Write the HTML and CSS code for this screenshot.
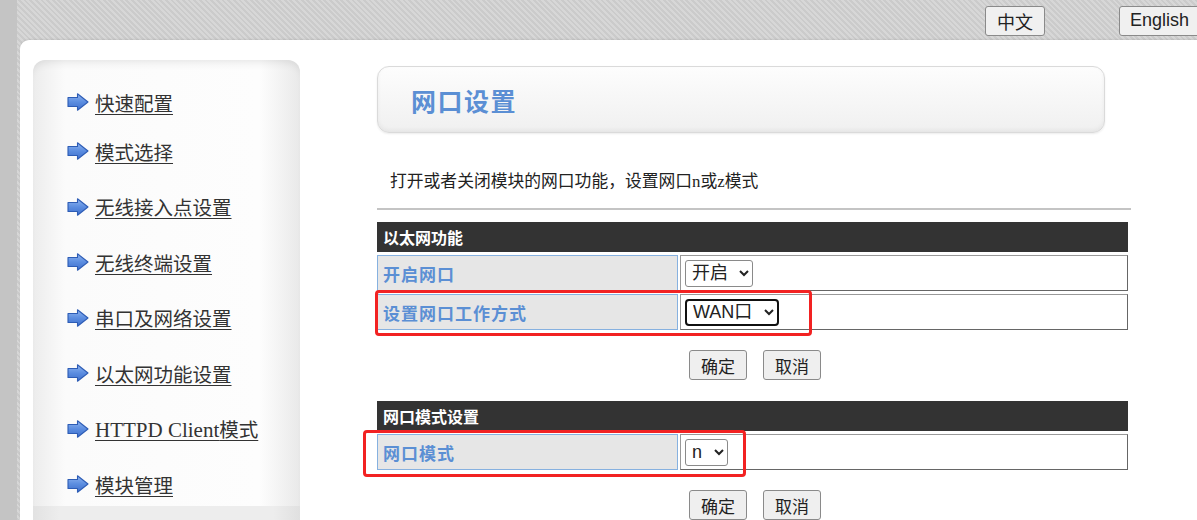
FILE: index.html
```html
<!DOCTYPE html>
<html lang="zh-CN">
<head>
    <meta charset="UTF-8">
    <meta name="viewport" content="width=device-width, initial-scale=1.0">
    <title>网口设置</title>
    <link rel="stylesheet" href="styles.css">
</head>
<body>
    <svg width="0" height="0" class="defs">
        <defs>
            <linearGradient id="arrowFill" x1="0" y1="0" x2="0" y2="1">
                <stop offset="0" stop-color="#8fb4f0"/>
                <stop offset="0.5" stop-color="#5b8de0"/>
                <stop offset="1" stop-color="#3f6fcc"/>
            </linearGradient>
        </defs>
    </svg>
    <div class="topbar">
        <button class="lang">中文</button>
        <button class="lang lang-en">English</button>
    </div>
    <div class="panel">
        <div class="sidebar">
            <ul class="nav">
                <li><svg class="arrow" viewBox="0 0 22 18"><path d="M1 4.5H10.5V0.8L21 9L10.5 17.2V13.5H1Z"/></svg><a href="#">快速配置</a></li>
                <li><svg class="arrow" viewBox="0 0 22 18"><path d="M1 4.5H10.5V0.8L21 9L10.5 17.2V13.5H1Z"/></svg><a href="#">模式选择</a></li>
                <li><svg class="arrow" viewBox="0 0 22 18"><path d="M1 4.5H10.5V0.8L21 9L10.5 17.2V13.5H1Z"/></svg><a href="#">无线接入点设置</a></li>
                <li><svg class="arrow" viewBox="0 0 22 18"><path d="M1 4.5H10.5V0.8L21 9L10.5 17.2V13.5H1Z"/></svg><a href="#">无线终端设置</a></li>
                <li><svg class="arrow" viewBox="0 0 22 18"><path d="M1 4.5H10.5V0.8L21 9L10.5 17.2V13.5H1Z"/></svg><a href="#">串口及网络设置</a></li>
                <li><svg class="arrow" viewBox="0 0 22 18"><path d="M1 4.5H10.5V0.8L21 9L10.5 17.2V13.5H1Z"/></svg><a href="#">以太网功能设置</a></li>
                <li><svg class="arrow" viewBox="0 0 22 18"><path d="M1 4.5H10.5V0.8L21 9L10.5 17.2V13.5H1Z"/></svg><a href="#"><span class="latin">HTTPD Client</span>模式</a></li>
                <li><svg class="arrow" viewBox="0 0 22 18"><path d="M1 4.5H10.5V0.8L21 9L10.5 17.2V13.5H1Z"/></svg><a href="#">模块管理</a></li>
            </ul>
            <div class="sidebar-foot"></div>
        </div>

        <div class="main">
            <div class="title-box">
                <h1>网口设置</h1>
            </div>
            <p class="desc">打开或者关闭模块的网口功能，设置网口n或z模式</p>
            <hr class="divider">

            <div class="section">
                <div class="sec-head">以太网功能</div>
                <div class="row">
                    <div class="label">开启网口</div>
                    <div class="value">
                        <select class="sel"><option>开启</option><option>关闭</option></select>
                    </div>
                </div>
                <div class="row">
                    <div class="label">设置网口工作方式</div>
                    <div class="value">
                        <select class="sel sel-focus"><option>WAN口</option><option>LAN口</option></select>
                    </div>
                    <span class="mark mark-wan"></span>
                </div>
                <div class="actions">
                    <button class="btn">确定</button>
                    <button class="btn">取消</button>
                </div>
            </div>

            <div class="section">
                <div class="sec-head">网口模式设置</div>
                <div class="row">
                    <div class="label">网口模式</div>
                    <div class="value">
                        <select class="sel"><option>n</option><option>z</option></select>
                    </div>
                    <span class="mark mark-mode"></span>
                </div>
                <div class="actions">
                    <button class="btn">确定</button>
                    <button class="btn">取消</button>
                </div>
            </div>
        </div>
    </div>
</body>
</html>
```

FILE: styles.css
```css
html, body {
    margin: 0;
    padding: 0;
    height: 100%;
    overflow: hidden;
}
body {
    font-family: "Liberation Serif", "Noto Sans CJK SC", serif;
    color: #333;
    background-color: #c6c6c6;
    background-image:
        linear-gradient(to right, #c4c4c4 0, #c4c4c4 17px, transparent 17px),
        repeating-linear-gradient(45deg, #cbcbcb 0, #cbcbcb 2px, #d7d7d7 2px, #d7d7d7 4px);
}
.defs {
    position: absolute;
}
.topbar {
    height: 40px;
    display: flex;
    justify-content: flex-end;
    align-items: center;
    gap: 74px;
    margin-right: -3px;
}
.lang {
    font-family: "Liberation Sans", "Noto Sans CJK SC", sans-serif;
    font-size: 18px;
    height: 30px;
    padding: 0 11px;
    border: 1px solid #8a8a8a;
    border-radius: 3px;
    background-color: #f0f0f0;
    color: #222;
    margin-top: 1px;
}
.lang-en {
    padding: 0 10px;
}
.panel {
    margin-left: 20px;
    height: 480px;
    background-color: #fff;
    border-top-left-radius: 9px;
    box-shadow: 0 -1px 2px rgba(0, 0, 0, 0.08);
    display: flex;
    padding: 20px 0 0 13px;
    box-sizing: border-box;
}
.sidebar {
    width: 267px;
    height: 460px;
    flex-shrink: 0;
    border-radius: 12px 12px 0 0;
    background: linear-gradient(to right, #ececec 0, #fbfbfb 12%, #fdfdfd 85%, #e9e9e9 100%);
    box-shadow: inset 0 8px 10px -6px rgba(0, 0, 0, 0.1);
    position: relative;
}
.sidebar-foot {
    position: absolute;
    left: 0;
    right: 0;
    bottom: 0;
    height: 14px;
    background: linear-gradient(to right, #e2e2e2, #ededed 10%, #ededed 90%, #e0e0e0);
}
.nav {
    list-style: none;
    margin: 0;
    padding: 21px 0 0 34px;
}
.nav li {
    height: 55.5px;
    display: flex;
    align-items: center;
    gap: 6px;
}
.nav li:first-child {
    height: 42.5px;
}
.arrow {
    width: 22px;
    height: 18px;
    flex-shrink: 0;
}
.arrow path {
    fill: url(#arrowFill);
    stroke: #2d5cb5;
    stroke-width: 1.1;
    stroke-linejoin: round;
}
.nav a {
    font-size: 19.5px;
    color: #333;
    text-decoration: underline;
    text-underline-offset: 3px;
}
.latin {
    font-size: 21px;
}
.main {
    margin-left: 77px;
    width: 754px;
    padding-top: 6px;
}
.title-box {
    width: 728px;
    height: 67px;
    border: 1px solid #dadada;
    border-radius: 12px;
    background: linear-gradient(#fdfdfd, #f0f0f0);
    box-shadow: inset 0 -2px 4px rgba(0, 0, 0, 0.05), 0 1px 2px rgba(0, 0, 0, 0.08);
    display: flex;
    align-items: center;
    padding-left: 33px;
    box-sizing: border-box;
}
.title-box h1 {
    margin: 0;
    font-family: "Noto Sans CJK SC", sans-serif;
    font-size: 25px;
    font-weight: bold;
    color: #5b8fd4;
    letter-spacing: 1.5px;
}
.desc {
    margin: 39px 0 0 13px;
    font-size: 16.8px;
    line-height: 20px;
    color: #222;
}
.divider {
    margin: 16px 0 0 0;
    border: none;
    height: 2px;
    background-color: #c4c4c4;
}
.section {
    width: 751px;
}
.sec-head {
    height: 30px;
    background-color: #333;
    color: #fff;
    font-family: "Noto Sans CJK SC", sans-serif;
    font-weight: bold;
    font-size: 16px;
    line-height: 30px;
    padding-left: 6px;
    margin-top: 12px;
}
.row {
    display: flex;
    gap: 2px;
    margin-top: 3px;
    height: 36px;
    position: relative;
}
.label {
    width: 301px;
    box-sizing: border-box;
    border: 1px solid #86b1e0;
    background-color: #e6e6e6;
    color: #5b8fd4;
    font-family: "Noto Sans CJK SC", sans-serif;
    font-weight: bold;
    font-size: 17px;
    letter-spacing: 1px;
    padding-left: 5px;
    display: flex;
    align-items: center;
}
.value {
    flex: 1;
    box-sizing: border-box;
    border: 1px solid #666;
    border-top-color: #999;
    border-left-color: #999;
    display: flex;
    align-items: center;
    padding-left: 4px;
}
.sel {
    font-family: "Liberation Sans", "Noto Sans CJK SC", sans-serif;
    font-size: 18px;
    height: 27px;
    border: 1px solid #8a8a8a;
    border-radius: 3px;
    background-color: #fff;
    color: #222;
    padding: 0 8px 0 2px;
}
.sel-focus {
    border: 2px solid #111;
    border-radius: 4px;
}
.mark {
    position: absolute;
    border: 3px solid #f22222;
    border-radius: 4px;
    pointer-events: none;
}
.mark-wan {
    left: -2px;
    top: -4px;
    width: 431px;
    height: 40px;
}
.mark-mode {
    left: -14px;
    top: -4px;
    width: 377px;
    height: 41px;
}
.actions {
    display: flex;
    justify-content: center;
    gap: 16px;
    margin-top: 20px;
    padding-left: 5px;
}
.btn {
    font-family: "Noto Sans CJK SC", sans-serif;
    font-size: 17px;
    width: 58px;
    height: 30px;
    padding: 0;
    border: 1px solid #8a8a8a;
    border-radius: 3px;
    background-color: #efefef;
    color: #222;
}
.section + .section .sec-head {
    margin-top: 21px;
}
```
